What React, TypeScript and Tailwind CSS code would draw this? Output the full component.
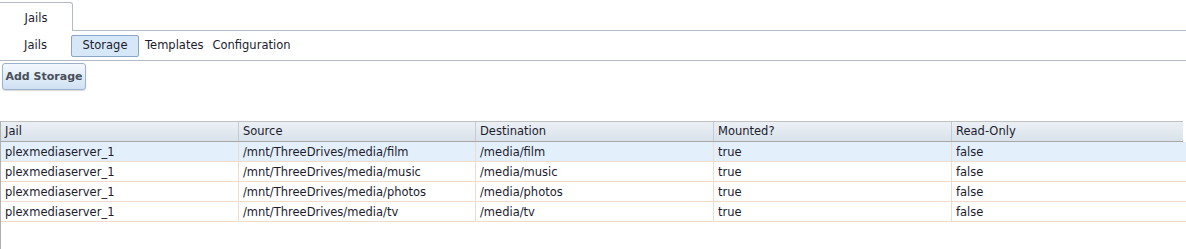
import React from "react";

const rows = [
  ["plexmediaserver_1", "/mnt/ThreeDrives/media/film", "/media/film", "true", "false"],
  ["plexmediaserver_1", "/mnt/ThreeDrives/media/music", "/media/music", "true", "false"],
  ["plexmediaserver_1", "/mnt/ThreeDrives/media/photos", "/media/photos", "true", "false"],
  ["plexmediaserver_1", "/mnt/ThreeDrives/media/tv", "/media/tv", "true", "false"],
];
const headers = ["Jail", "Source", "Destination", "Mounted?", "Read-Only"];
const cols = "grid grid-cols-[238px_237px_238px_238px_1fr]";

export default function App() {
  return (
    <div
      className="w-[1186px] h-[249px] bg-white text-[11.5px] text-[#1c1c2e] overflow-hidden"
      style={{ fontFamily: '"DejaVu Sans", Verdana, sans-serif' }}
    >
      {/* top tab row */}
      <div className="flex h-[31px]">
        <div className="mt-[2px] w-[73px] h-[29px] pt-[3px] border-t border-r border-[#b3bac6] rounded-tr-[3px] flex items-center justify-center bg-white">
          Jails
        </div>
        <div className="flex-1 border-b border-[#b3bac6]" />
      </div>
      {/* sub tabs */}
      <div className="flex items-center h-[30px] border-b border-[#b3bac6]">
        <div className="w-[71px] text-center">Jails</div>
        <div className="w-[68px] h-[22px] border border-[#8aa6c6] rounded-[2px] bg-[#d6e7f8] flex items-center justify-center">
          Storage
        </div>
        <div className="ml-[6px]">Templates</div>
        <div className="ml-[9px]">Configuration</div>
      </div>
      {/* add storage */}
      <div className="pl-[2px] pt-[2px] h-[60px]">
        <div className="w-[84px] h-[27px] pt-[1px] border border-[#9cb2cc] rounded-[3px] bg-gradient-to-b from-[#f4f8fd] to-[#d0e1f3] shadow-[0_1px_1px_rgba(0,0,0,0.15)] flex items-center justify-center font-bold text-[11px] text-[#4a4f5a]">
          Add Storage
        </div>
      </div>
      {/* table */}
      <div className="border-l border-[#b0b0b0] h-[128px]">
        <div className={`${cols} h-[21px] border-t border-b border-t-[#c0c0c0] border-b-[#a8a8a8] bg-gradient-to-b from-[#ebf0f5] to-[#d9e2ea] mr-[3px]`}>
          {headers.map((h, i) => (
            <div key={h} className={`px-[4px] pt-[1px] flex items-center ${i < 4 ? "border-r border-[#c5ccd4]" : ""}`}>
              {h}
            </div>
          ))}
        </div>
        {rows.map((r, ri) => (
          <div
            key={ri}
            className={`${cols} h-[20px] border-b border-[#eeddcc] ${ri === 0 ? "bg-[#e3effb]" : "bg-white"}`}
          >
            {r.map((c, i) => (
              <div key={i} className={`px-[4px] pt-[2px] flex items-center ${i < 4 ? "border-r border-[#eeddcc]" : ""}`}>
                {c}
              </div>
            ))}
          </div>
        ))}
      </div>
    </div>
  );
}
